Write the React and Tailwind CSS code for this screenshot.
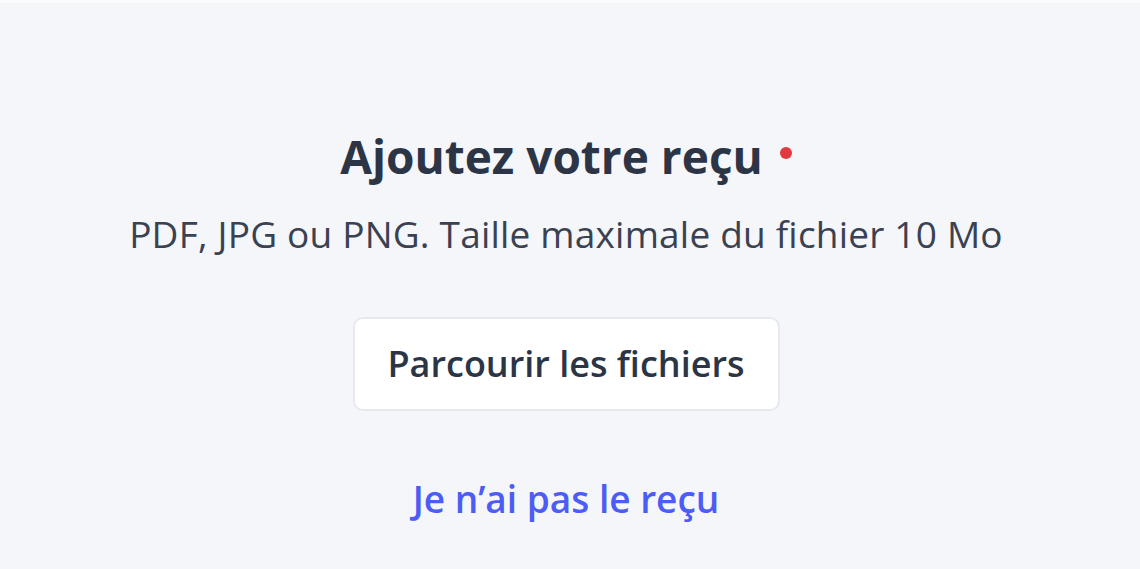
export default function App() {
  return (
    <div className="min-h-[569px] w-full border-t-[3px] border-[#fbfbfd] bg-[#f5f6fa] font-['Open_Sans',sans-serif]">
      <div className="flex flex-col items-center pr-[8px] pt-[123px]">
        <h1 className="flex items-start text-[46px] font-bold leading-[60px] text-[#2c3546]">
          Ajoutez votre reçu
          <span className="ml-[17px] mt-[21px] h-[12px] w-[12px] rounded-full bg-[#e0393e]" />
        </h1>
        <p className="mt-[26px] text-[37px] leading-[44px] tracking-[0.2px] text-[#3a4252]">
          PDF, JPG ou PNG. Taille maximale du fichier 10 Mo
        </p>
        <button className="mt-[61px] h-[94px] w-[427px] rounded-[10px] border-2 border-[#e6e9f2] bg-white text-[36px] font-semibold text-[#2c3546]">
          Parcourir les fichiers
        </button>
        <a href="#" className="mt-[66px] text-[37px] font-semibold leading-[44px] text-[#4c5cf7]">
          Je n’ai pas le reçu
        </a>
      </div>
    </div>
  );
}
